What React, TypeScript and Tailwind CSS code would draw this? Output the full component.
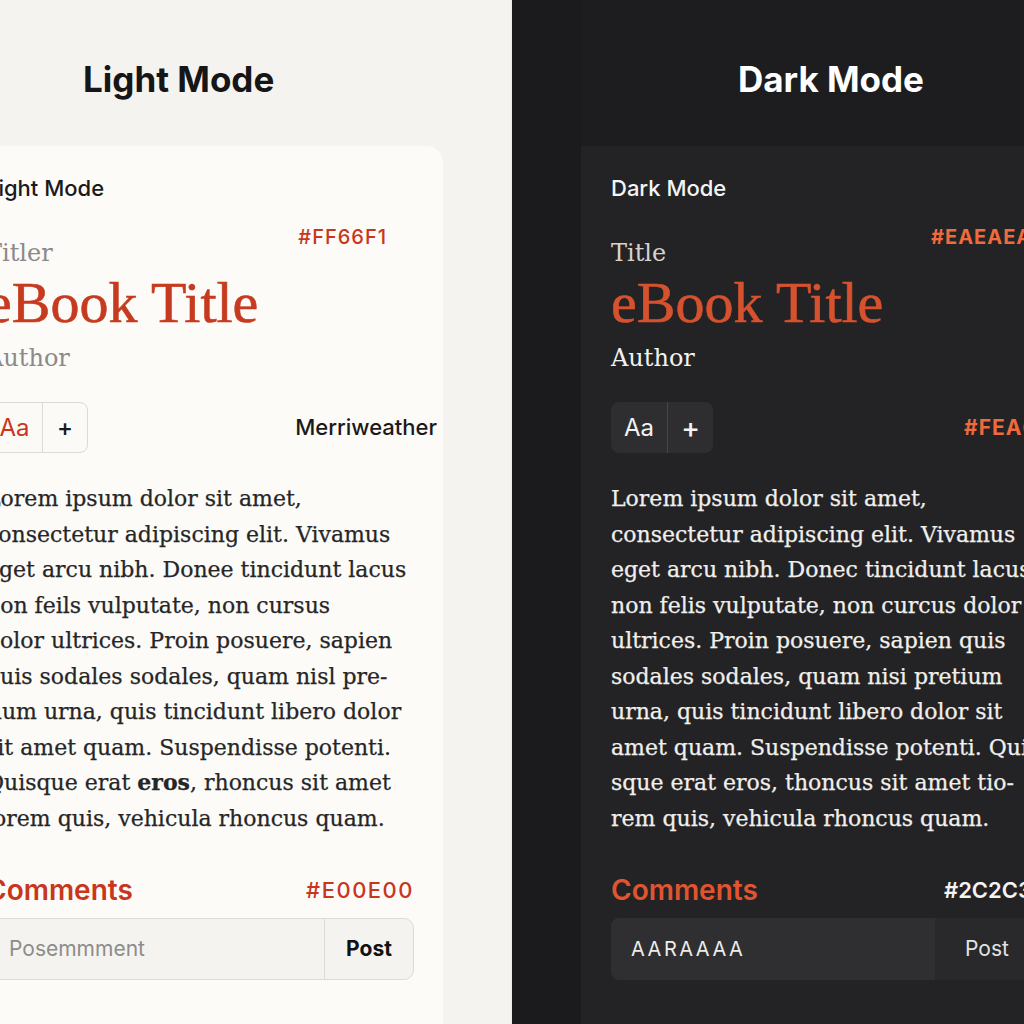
import React from "react";

const sans = "font-['Inter','Liberation_Sans',sans-serif]";
const serif = "font-['DejaVu_Serif','Liberation_Serif',serif]";
const titleSerif = "font-['Liberation_Serif','DejaVu_Serif',serif]";

const lightLines: React.ReactNode[] = [
  "Lorem ipsum dolor sit amet,",
  "consectetur adipiscing elit. Vivamus",
  "eget arcu nibh. Donee tincidunt lacus",
  "non feils vulputate, non cursus",
  "dolor ultrices. Proin posuere, sapien",
  "quis sodales sodales, quam nisl pre-",
  "tium urna, quis tincidunt libero dolor",
  "sit amet quam. Suspendisse potenti.",
  <>
    Quisque erat <b className="font-bold">eros</b>, rhoncus sit amet
  </>,
  "lorem quis, vehicula rhoncus quam.",
];

const darkLines: React.ReactNode[] = [
  "Lorem ipsum dolor sit amet,",
  "consectetur adipiscing elit. Vivamus",
  "eget arcu nibh. Donec tincidunt lacus",
  "non felis vulputate, non curcus dolor",
  "ultrices. Proin posuere, sapien quis",
  "sodales sodales, quam nisi pretium",
  "urna, quis tincidunt libero dolor sit",
  "amet quam. Suspendisse potenti. Qui-",
  "sque erat eros, thoncus sit amet tio-",
  "rem quis, vehicula rhoncus quam.",
];

function Paragraph({ lines, color }: { lines: React.ReactNode[]; color: string }) {
  return (
    <div className={`${serif} text-[22px] leading-[35.5px] mt-[28px] [-webkit-text-stroke:0.25px_currentColor] ${color}`}>
      {lines.map((l, i) => (
        <div key={i} className="whitespace-nowrap">
          {l}
        </div>
      ))}
    </div>
  );
}

export default function App() {
  return (
    <div className={`w-[1024px] h-[1024px] flex overflow-hidden ${sans}`}>
      {/* Light half */}
      <div className="w-[512px] h-full bg-[#f5f3ef] flex flex-col overflow-hidden border-r border-[#ecebe8]">
        <div className="h-[146px] pt-[59px] pl-[83px]">
          <h1 className="text-[35px] leading-[40px] font-bold text-[#161616]">Light Mode</h1>
        </div>
        <div className="ml-[-44px] w-[487px] flex-1 bg-[#fcfbf8] rounded-tr-[16px] pl-[30px] pr-[29px] flex flex-col">
          <div className="mt-[28px] h-[28px] leading-[28px] text-[22px] font-medium text-[#1a1a1a] whitespace-nowrap">
            Light Mode
          </div>
          <div className="mt-[19px] flex justify-between items-start">
            <div className={`${serif} mt-[16px] text-[24px] leading-[32px] text-[#8a8a88]`}>Titler</div>
            <div className="mr-[27px] text-[20px] leading-[32px] font-medium tracking-[1px] text-[#c8361c]">#FF66F1</div>
          </div>
          <div className={`${titleSerif} mt-[6px] text-[58px] leading-[56px] text-[#c63b1f] whitespace-nowrap [-webkit-text-stroke:0.6px_currentColor]`}>
            eBook Title
          </div>
          <div className={`${serif} mt-[11px] text-[24px] leading-[32px] text-[#8a8a88]`}>Author</div>
          <div className="mt-[28px] h-[51px] flex items-center justify-between">
            <div className="h-[51px] flex rounded-[8px] border border-[#dcdad6] bg-[#fbfaf7]">
              <div className="w-[56px] flex items-center justify-center text-[24px] text-[#c8361c] border-r border-[#dcdad6]">Aa</div>
              <div className="w-[44px] flex items-center justify-center text-[24px] font-medium text-[#1a1a1a]">+</div>
            </div>
            <div className="mr-[-23px] text-[22px] font-medium text-[#1a1a1a]">Merriweather</div>
          </div>
          <Paragraph lines={lightLines} color="text-[#262626]" />
          <div className="mt-[36px] h-[36px] flex items-center justify-between">
            <div className="text-[28px] font-semibold text-[#c8361c]">Comments</div>
            <div className="text-[22px] font-medium tracking-[1.5px] text-[#c8361c]">#E00E00</div>
          </div>
          <div className="mt-[10px] h-[62px] flex rounded-[10px] border border-[#dddbd7] bg-[#f4f3f0] overflow-hidden">
            <div className="flex-1 flex items-center pl-[22px] text-[21px] text-[#8c8c8a] border-r border-[#dddbd7]">
              Posemmment
            </div>
            <div className="w-[88px] flex items-center justify-center text-[21px] font-bold text-[#111]">Post</div>
          </div>
        </div>
      </div>

      {/* Dark half */}
      <div className="w-[512px] h-full bg-[#1b1b1d] flex flex-col overflow-hidden">
        <div className="h-[146px] pt-[59px] ml-[69px] pl-[157px] bg-[#1d1d1f]">
          <h1 className="text-[35px] leading-[40px] font-bold text-white whitespace-nowrap">Dark Mode</h1>
        </div>
        <div className="ml-[69px] w-[488px] shrink-0 flex-1 bg-[#232325] pl-[30px] flex flex-col">
          <div className="mt-[28px] h-[28px] leading-[28px] text-[22px] font-medium text-[#f4f4f4] whitespace-nowrap">
            Dark Mode
          </div>
          <div className="mt-[19px] flex items-start">
            <div className={`${serif} w-[320px] shrink-0 mt-[16px] text-[24px] leading-[32px] text-[#d8d2ce]`}>Title</div>
            <div className="text-[20px] leading-[32px] font-bold tracking-[1px] text-[#ef6a3c] whitespace-nowrap">#EAEAEA</div>
          </div>
          <div className={`${titleSerif} mt-[6px] text-[58px] leading-[56px] text-[#d6522e] whitespace-nowrap [-webkit-text-stroke:0.6px_currentColor]`}>
            eBook Title
          </div>
          <div className={`${serif} mt-[11px] text-[24px] leading-[32px] text-[#f2f2f2]`}>Author</div>
          <div className="mt-[28px] h-[51px] flex items-center">
            <div className="w-[353px] shrink-0">
              <div className="h-[51px] w-[102px] flex rounded-[8px] bg-[#2e2e30]">
                <div className="w-[57px] flex items-center justify-center text-[24px] text-[#f2f2f2] border-r border-[#454547]">Aa</div>
                <div className="w-[45px] flex items-center justify-center text-[28px] font-medium text-[#f2f2f2]">+</div>
              </div>
            </div>
            <div className="text-[21px] font-bold tracking-[1px] text-[#ef6a3c] whitespace-nowrap">#FEA6C4</div>
          </div>
          <Paragraph lines={darkLines} color="text-[#f1efec]" />
          <div className="mt-[36px] h-[36px] flex items-center">
            <div className="w-[333px] shrink-0 text-[28px] font-semibold text-[#e0552f]">Comments</div>
            <div className="text-[22px] font-semibold text-[#f4f4f4] whitespace-nowrap">#2C2C3C</div>
          </div>
          <div className="mt-[10px] h-[62px] w-[428px] flex">
            <div className="w-[324px] flex items-center pl-[20px] text-[20px] tracking-[2.5px] text-[#ececec] bg-[#2f2f31] rounded-l-[8px]">
              AARAAAA
            </div>
            <div className="flex-1 flex items-center pl-[30px] text-[21px] text-[#e4e4e4] bg-[#29292b] rounded-r-[8px]">Post</div>
          </div>
        </div>
      </div>
    </div>
  );
}
